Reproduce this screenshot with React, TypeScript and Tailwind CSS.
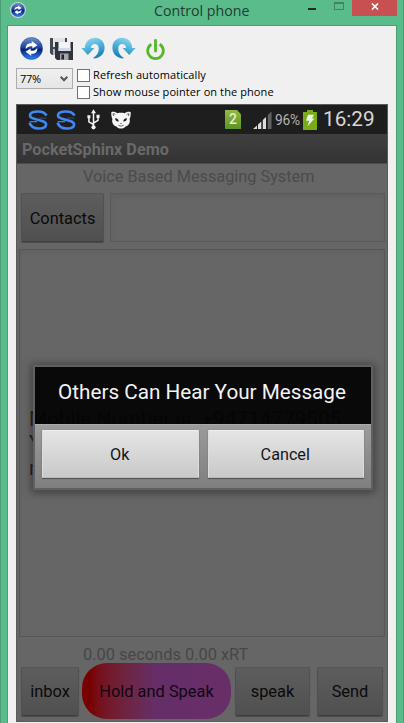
import type { ReactNode } from "react";

const roboto = "font-['Roboto','Liberation_Sans',sans-serif]";
const segoe = "font-['Open_Sans','Noto_Sans',sans-serif]";

function SyncBall({ size, id }: { size: number; id: string }) {
  return (
    <svg width={size} height={size} viewBox="0 0 24 24" className="shrink-0">
      <defs>
        <linearGradient id={id} x1="0" y1="0" x2="0" y2="1">
          <stop offset="0" stopColor="#7190cc" />
          <stop offset="0.45" stopColor="#1d449c" />
          <stop offset="0.55" stopColor="#062078" />
          <stop offset="1" stopColor="#2f86fa" />
        </linearGradient>
      </defs>
      <circle cx="12" cy="12" r="11.5" fill={`url(#${id})`} stroke="#24458f" strokeWidth="0.6" />
      <path d="M6 12.6C5.6 8.2 8.4 6 12.3 6.5L12.2 4.2L18.2 8.6L13 12L12.8 9.7C10.2 9.3 8.2 10.1 6 12.6Z" fill="#fff" />
      <path d="M18 11.4C18.4 15.8 15.6 18 11.7 17.5L11.8 19.8L5.8 15.4L11 12L11.2 14.3C13.8 14.7 15.8 13.9 18 11.4Z" fill="#fff" />
    </svg>
  );
}

function SaveAll() {
  return (
    <svg width="24" height="24" viewBox="0 0 24 24">
      <path d="M0 1H17V18H2L0 16Z" fill="#454852" />
      <path d="M3 1H15V10H3Z" fill="#dfe2e8" />
      <path d="M3 12H6V18H3Z" fill="#b6bac3" />
      <path d="M5 5H23V23H7L5 21Z" fill="#30333c" />
      <path d="M8.5 5H20.5V14H8.5Z" fill="#f1f3f8" />
      <path d="M8.5 11H20.5V14H8.5Z" fill="#d3d8e3" />
      <path d="M10 16.5H18.5V23H10Z" fill="#a2a5ae" />
      <path d="M11.5 17.5H14V22.5H11.5Z" fill="#202329" />
    </svg>
  );
}

function Turn({ flip, id }: { flip?: boolean; id: string }) {
  return (
    <svg width="24" height="23" viewBox="0 0 24 23" className={flip ? "-scale-x-100" : ""}>
      <defs>
        <linearGradient id={id} x1="0" y1="0" x2="0.4" y2="1">
          <stop offset="0" stopColor="#a8e0ed" />
          <stop offset="0.5" stopColor="#55b7dc" />
          <stop offset="1" stopColor="#1886bd" />
        </linearGradient>
      </defs>
      <path d="M3.8 11C4 4.8 8.3 .8 14 .8C19.8 .8 23.6 5 23.6 10.6C23.6 16.8 19.2 21.4 12.7 21.6L12.2 20.8C15.8 18.8 18 15.3 17.7 11C17.5 8.5 16 7 13.8 7C11.6 7 10 8.5 9.8 11H13.4L6.8 18L.3 11Z" fill={`url(#${id})`} />
    </svg>
  );
}

function Power() {
  return (
    <svg width="19" height="22" viewBox="0 0 19 22" fill="none" stroke="#54b824" strokeWidth="2.8">
      <path d="M5.3 5.2A7.8 7.8 0 1 0 13.7 5.2" />
      <path d="M9.5 1.4V12" strokeLinecap="round" />
    </svg>
  );
}

function SwirlS() {
  return (
    <svg width="20" height="20" viewBox="0 0 20 20" fill="none" stroke="#3f88f5" strokeWidth="2.6">
      <path d="M18.6 5.4C16.4 2.2 13 1.5 10 1.5C5.5 1.5 2 2.8 2 5.6C2 7.6 3.6 8.1 6 8.7L14 11C16.8 11.8 18.1 12.6 18.1 14.4C18.1 17.2 15 18.5 10.5 18.5C6 18.5 2.8 16.4 1.5 12.8" />
      <path d="M1.6 11.7H9" strokeWidth="1.2" />
      <path d="M11 8L18.4 8.2" strokeWidth="0.9" opacity=".5" />
    </svg>
  );
}

function Usb() {
  return (
    <svg width="13" height="21" viewBox="0 0 13 21" fill="none" stroke="#f4f4f4" strokeWidth="1.5">
      <path d="M6.5 3V18M6.5 15.5L1.9 12.8V8M6.5 14L11 11.3V7" />
      <path d="M4 4.3L6.5.3L9 4.3ZM.4 6.3H3.4V9.3H.4ZM9.5 5.8H12.6V8.9H9.5Z" fill="#f4f4f4" stroke="none" />
      <circle cx="6.5" cy="18.3" r="2.1" fill="#f4f4f4" stroke="none" />
    </svg>
  );
}

function CatFace() {
  return (
    <svg width="20" height="18" viewBox="0 0 20 18">
      <path d="M.3 1.2C2.3.4 4.8 1 6.2 2.3C8.6 1.7 11.4 1.7 13.8 2.3C15.2 1 17.7.4 19.7 1.2C19.9 4.2 19.4 6.2 18.6 8C19.6 12.2 17.3 14.9 14.2 15.7C13 17.2 11.5 17.6 10 17.6C8.5 17.6 7 17.2 5.8 15.7C2.7 14.9.4 12.2 1.4 8C.6 6.2.1 4.2.3 1.2Z" fill="#f6f6f6" />
      <path d="M4 7.4Q6.9 7 7.8 10.4Q4.6 10.8 4 7.4ZM16 7.4Q13.1 7 12.2 10.4Q15.4 10.8 16 7.4ZM9.1 12.3H10.9L10 13.3Z" fill="#1e1e1e" />
      <path d="M7.3 14.3Q10 16 12.7 14.3M1.9 2.8Q3.3 2.5 4.3 3.5M18.1 2.8Q16.7 2.5 15.7 3.5M2 2.8L2.6 5M18 2.8L17.4 5" fill="none" stroke="#444" strokeWidth="0.8" />
    </svg>
  );
}

function Signal() {
  return (
    <svg width="19" height="18" viewBox="0 0 19 18" fill="#dedede">
      <path d="M0 18L4 14.5V18ZM5 18V13.5L8.3 10.5V18ZM9.8 18V9L13 6V18Z" />
      <path d="M14.8 18V4L18.5 .5V18Z" fill="#626262" />
    </svg>
  );
}

function Battery() {
  return (
    <svg width="14" height="20" viewBox="0 0 14 21" preserveAspectRatio="none">
      <path d="M4 0H10V2H14V21H0V2H4Z" fill="#77ad16" />
      <path d="M5 5H11L9 9H11.5L4.5 17L6.2 11.2H3Z" fill="#edf1e5" />
    </svg>
  );
}

function DimButton({ children, className }: { children: ReactNode; className: string }) {
  return (
    <button className={`flex h-[49px] shrink-0 items-center justify-center rounded-[2px] border border-t-[#555] border-x-[#515151] border-b-[#3d3d3d] bg-linear-to-b from-[#5d5d5d] to-[#505050] pt-[3px] text-[16.4px] text-[#0a0a0a] shadow-[0_1px_1px_#4b4b4b] ${className}`}>
      {children}
    </button>
  );
}

function DialogButton({ children }: { children: ReactNode }) {
  return (
    <button className="flex h-12 flex-1 items-center justify-center rounded-[1px] border border-t-[#eee] border-x-[#ddd] border-b-[#bbb] bg-linear-to-b from-[#e5e5e5] to-[#c9c9c9] pr-px pt-[2px] text-[16.2px] text-[#151515] shadow-[0_1px_1px_#505050,0_0_1px_#707070]">
      {children}
    </button>
  );
}

function Check({ label }: { label: string }) {
  return (
    <label className="flex h-[17px] items-center gap-[3px] whitespace-nowrap text-[11px] tracking-[0.09px] text-black">
      <span className="size-[13px] border border-[#707070] bg-white" />
      {label}
    </label>
  );
}

export default function App() {
  return (
    <div className="flex h-[723px] w-[404px] flex-col overflow-hidden border-x border-[#489f76] bg-[#5abb8b]">
      <header className={`flex h-[25px] shrink-0 ${segoe}`}>
        <div className="ml-[9px] mt-[2px] size-4 rounded-full bg-[#c5d8dc] p-px">
          <SyncBall size={14} id="titleBall" />
        </div>
        <h1 className="ml-[128px] mt-[-1px] w-[142px] whitespace-nowrap text-[14.2px] leading-[23px] text-[#243d32]">Control phone</h1>
        <div className="mt-2 ml-3 h-[2px] w-2 bg-[#222d28]" />
        <div className="ml-[18px] mt-[2px] h-2 w-[10px] border border-t-2 border-[#438263]" />
        <button className="ml-2 flex h-4 w-[45px] items-center justify-center bg-[#c75050] pb-[3px] pl-px">
          <svg width="8" height="7" viewBox="0 0 9 8" stroke="white" strokeWidth="1.8"><path d="M1 .5L8 7.5M8 .5L1 7.5" /></svg>
        </button>
      </header>

      <main className="mx-[6px] flex min-h-0 flex-1 flex-col border-x border-t border-[#489f76] bg-[#f0f0f0] px-2">
        <div className="flex h-[41px] shrink-0 items-start pl-1 pt-[11px]">
          <SyncBall size={23} id="refreshBall" />
          <div className="ml-[7px]"><SaveAll /></div>
          <div className="ml-[7px]"><Turn id="turnLeft" /></div>
          <div className="ml-[7px]"><Turn flip id="turnRight" /></div>
          <div className="ml-[10px] mt-[2px]"><Power /></div>
        </div>
        <div className={`flex h-[37px] shrink-0 gap-1 ${segoe}`}>
          <div className="mt-px flex h-[21px] w-[57px] items-center justify-between border border-[#acacac] bg-linear-to-b from-[#efefef] to-[#e6e6e6] pl-[3px] pr-1 pt-px text-[11px] text-black">
            <span className="tracking-[-0.3px]">77%</span>
            <svg width="8" height="6" viewBox="0 0 8 6" fill="none" stroke="#555" strokeWidth="2"><path d="M.7.8L4 4.2L7.3.8" /></svg>
          </div>
          <div><Check label="Refresh automatically" /><Check label="Show mouse pointer on the phone" /></div>
        </div>

        <section className={`relative flex h-[618px] w-[372px] shrink-0 flex-col overflow-hidden border border-[#5a5a5a] bg-[#666] ${roboto}`}>
          <div className="flex h-[29px] shrink-0 items-center bg-[#1e1e1e] pl-[11px] text-[#d7d7d7]">
            <SwirlS />
            <div className="ml-2"><SwirlS /></div>
            <div className="ml-[11px]"><Usb /></div>
            <div className="ml-[11px]"><CatFace /></div>
            <div className="ml-[94px] flex h-[19px] w-4 items-center justify-center bg-linear-to-b from-[#93b941] to-[#589522] text-[14px] font-medium text-[#e2efcd] [clip-path:polygon(0_0,75%_0,100%_22%,100%_100%,0_100%)]">2</div>
            <div className="ml-3"><Signal /></div>
            <span className="ml-[3px] w-[25px] whitespace-nowrap pt-px text-[13.8px] tracking-[-0.3px] text-[#b2b2b2]">96%</span>
            <div className="ml-[3px]"><Battery /></div>
            <span className="ml-[6px] pt-px text-[20.7px]">16:29</span>
          </div>
          <div className="flex h-[30px] shrink-0 items-center border-b border-[#4b4b4b] bg-linear-to-b from-[#404040] to-[#333] pl-[5px] pt-[3px] text-[16.2px] font-bold text-[#696969]">PocketSphinx Demo</div>
          <div className="h-[29px] shrink-0 pl-[66px] text-[16.3px] leading-[25px] whitespace-nowrap text-[#4b4b4b]">Voice Based Messaging System</div>
          <div className="flex h-[49px] shrink-0 gap-[6px] pl-1 pr-[2px]">
            <DimButton className="w-[83px]">Contacts</DimButton>
            <div className="flex-1 border border-[#595959] shadow-[inset_0_2px_4px_#606060]" />
          </div>
          <div className="ml-[2px] mr-[2px] mt-[7px] h-[388px] shrink-0 border border-[#565656] px-[9px] pt-[157px] text-[20.7px] leading-[24.4px] text-black shadow-[inset_0_2px_4px_#606060]">
            <div className="whitespace-nowrap">Mobile Number is: +94714779505</div>
            <div>Your</div>
            <div>message</div>
          </div>
          <div className="h-[26px] shrink-0 pl-[66px] pt-[6px] text-[16.4px] leading-[24px] whitespace-nowrap text-[#464646]">0.00 seconds 0.00 xRT</div>
          <div className="flex h-14 shrink-0 items-center pl-1">
            <DimButton className="w-[58px]">inbox</DimButton>
            <button className="ml-[3px] flex h-14 w-[149px] shrink-0 items-center justify-center rounded-[25px] bg-linear-to-r from-[#780000] from-5% via-[#652e68] via-50% to-[#682e68] pt-[2px] text-[16.4px] whitespace-nowrap text-[#120611]">Hold and Speak</button>
            <DimButton className="ml-1 w-[75px]">speak</DimButton>
            <DimButton className="ml-[7px] w-[66px]">Send</DimButton>
          </div>

          <div className="absolute left-[16px] top-[260px] w-[340px] rounded-[2px] border-2 border-[#606060] shadow-[0_1px_7px_3px_#3d3d3dbb]">
            <div className="flex h-[57px] items-center justify-center bg-[#050505f4] pr-[2px] pb-[6px] text-[20.7px] whitespace-nowrap text-[#f3f3f3]">Others Can Hear Your Message</div>
            <div className="flex h-16 gap-[9px] border-t border-[#aaa] bg-linear-to-b from-[#9b9b9b] to-[#7f7f7f] px-[7px] pt-[5px]">
              <DialogButton>Ok</DialogButton>
              <DialogButton>Cancel</DialogButton>
            </div>
          </div>
        </section>
      </main>
    </div>
  );
}
